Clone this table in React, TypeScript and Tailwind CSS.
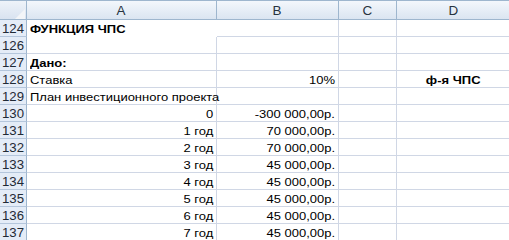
import React from "react";

type Align = "left" | "right" | "center";
type Cell = { text?: string; align?: Align; bold?: boolean; noRight?: boolean; noBottom?: boolean };
type Row = { n: number; cells: Cell[] };

const rows: Row[] = [
  { n: 124, cells: [{ text: "ФУНКЦИЯ ЧПС", bold: true, noRight: true, noBottom: true }, {}, {}, {}] },
  { n: 126, cells: [{}, {}, {}, {}] },
  { n: 127, cells: [{ text: "Дано:", bold: true }, {}, {}, {}] },
  { n: 128, cells: [{ text: "Ставка" }, { text: "10%", align: "right" }, {}, { text: "ф-я ЧПС", align: "center", bold: true }] },
  { n: 129, cells: [{ text: "План инвестиционного проекта" }, {}, {}, {}] },
  { n: 130, cells: [{ text: "0", align: "right" }, { text: "-300 000,00р.", align: "right" }, {}, {}] },
  { n: 131, cells: [{ text: "1 год", align: "right" }, { text: "70 000,00р.", align: "right" }, {}, {}] },
  { n: 132, cells: [{ text: "2 год", align: "right" }, { text: "70 000,00р.", align: "right" }, {}, {}] },
  { n: 133, cells: [{ text: "3 год", align: "right" }, { text: "45 000,00р.", align: "right" }, {}, {}] },
  { n: 134, cells: [{ text: "4 год", align: "right" }, { text: "45 000,00р.", align: "right" }, {}, {}] },
  { n: 135, cells: [{ text: "5 год", align: "right" }, { text: "45 000,00р.", align: "right" }, {}, {}] },
  { n: 136, cells: [{ text: "6 год", align: "right" }, { text: "45 000,00р.", align: "right" }, {}, {}] },
  { n: 137, cells: [{ text: "7 год", align: "right" }, { text: "45 000,00р.", align: "right" }, {}, {}] },
];

const columns = ["A", "B", "C", "D"];

function Text({ text, align, bold }: { text: string; align: Align; bold?: boolean }) {
  const origin = align === "right" ? "origin-right" : align === "center" ? "origin-center" : "origin-left";
  return (
    <span className={`inline-block whitespace-nowrap scale-x-[1.18] ${origin} ${bold ? "font-bold" : ""}`}>
      {text}
    </span>
  );
}

function DataCell({ cell }: { cell: Cell }) {
  const align = cell.align ?? "left";
  const justify = align === "right" ? "justify-end" : align === "center" ? "justify-center" : "justify-start";
  return (
    <div
      className={`flex h-[17px] overflow-visible bg-white px-[3px] text-black leading-[18px] ${justify} ${
        cell.noRight ? "" : "border-r border-[#d0d7e5]"
      } ${cell.noBottom ? "" : "border-b border-b-[#d0d7e5]"}`}
    >
      {cell.text ? <Text text={cell.text} align={align} bold={cell.bold} /> : null}
    </div>
  );
}

export default function App() {
  return (
    <div className="h-[240px] w-[509px] overflow-hidden bg-white font-['Liberation_Sans',Arial,sans-serif] text-[11px]">
      <div className="grid w-[510px] grid-cols-[27px_190px_122px_58px_113px]">
        {/* corner */}
        <div className="relative h-[20px] border-y border-r border-[#9eb6ce] bg-linear-to-b from-[#eef3f9] to-[#d9e3f0]">
          <svg className="absolute left-[15px] top-[8px]" width="10" height="10" viewBox="0 0 10 10">
            <polygon points="10,0 10,10 0,10" fill="#f3f5f8" />
          </svg>
        </div>
        {columns.map((c) => (
          <div
            key={c}
            className="flex h-[20px] items-start justify-center border-y border-r border-[#9eb6ce] bg-linear-to-b from-[#f3f7fc] to-[#dbe5f1] text-[#27333f] leading-[20px]"
          >
            <span className="inline-block scale-x-[1.12] text-[12px]">{c}</span>
          </div>
        ))}

        {rows.map((r) => (
          <React.Fragment key={r.n}>
            <div className="flex h-[17px] justify-center border-r border-b border-r-[#9eb6ce] border-b-[#b4c6dc] bg-[#e4ecf7] text-[#1f2a36] leading-[18px]">
              <span className="inline-block scale-x-[1.1] text-[12px]">{r.n}</span>
            </div>
            {r.cells.map((cell, i) => (
              <DataCell key={i} cell={cell} />
            ))}
          </React.Fragment>
        ))}
      </div>
    </div>
  );
}
